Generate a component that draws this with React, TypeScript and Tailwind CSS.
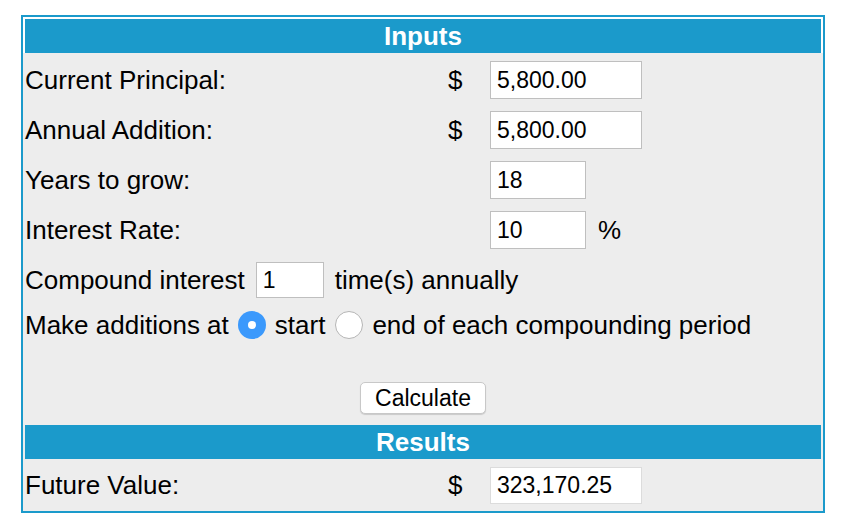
import React from "react";

const font = { fontFamily: '"Liberation Sans", Arial, Helvetica, sans-serif' };

function Field({ value, w, h = "h-[38px]", light = false }: { value: string; w: string; h?: string; light?: boolean }) {
  return (
    <div
      className={`${w} ${h} flex items-center bg-white border ${light ? "border-[#dcdcdc]" : "border-[#bfbfbf]"} pl-[6px] text-[23px] text-black`}
    >
      {value}
    </div>
  );
}

function Row({ label, dollar, children }: { label: string; dollar?: boolean; children: React.ReactNode }) {
  return (
    <div className="flex h-[50px] items-center">
      <div className="w-[425px] pl-[2px]">{label}</div>
      <div className="w-[42px]">{dollar ? "$" : ""}</div>
      {children}
    </div>
  );
}

function Radio({ checked }: { checked?: boolean }) {
  if (checked) {
    return (
      <span className="flex h-[28px] w-[28px] items-center justify-center rounded-full bg-[#3b99fc]">
        <span className="h-[8px] w-[8px] rounded-full bg-white" />
      </span>
    );
  }
  return <span className="h-[28px] w-[28px] rounded-full border border-[#b5b5b5] bg-white" />;
}

export default function App() {
  return (
    <div className="min-h-[530px] bg-white pl-[21px] pt-[15px]" style={font}>
      <div className="w-[804px] border-2 border-[#1b9acb] bg-white pt-[2px] text-[26px] leading-none text-black">
        <div className="mx-[2px] flex h-[34px] items-center justify-center bg-[#1b9acb] font-bold text-white">
          Inputs
        </div>

        <div className="bg-[#ededed] pt-[2px]">
          <Row label="Current Principal:" dollar>
            <Field value="5,800.00" w="w-[152px]" />
          </Row>
          <Row label="Annual Addition:" dollar>
            <Field value="5,800.00" w="w-[152px]" />
          </Row>
          <Row label="Years to grow:">
            <Field value="18" w="w-[96px]" />
          </Row>
          <Row label="Interest Rate:">
            <Field value="10" w="w-[96px]" />
            <span className="ml-[12px]">%</span>
          </Row>

          <div className="flex h-[50px] items-center pl-[2px]">
            <span>Compound interest</span>
            <div className="ml-[11px] mr-[11px]">
              <Field value="1" w="w-[68px]" h="h-[36px]" />
            </div>
            <span>time(s) annually</span>
          </div>

          <div className="flex h-[40px] items-center pl-[2px]">
            <span>Make additions at</span>
            <span className="ml-[9px] mr-[9px]">
              <Radio checked />
            </span>
            <span>start</span>
            <span className="ml-[10px] mr-[9px] flex">
              <Radio />
            </span>
            <span>end of each compounding period</span>
          </div>

          <div className="h-[37px]" />
          <div className="flex justify-center">
            <button className="h-[32px] w-[126px] rounded-[5px] border border-[#c8c8c8] bg-white text-[23px] text-black shadow-[0_1px_1px_rgba(0,0,0,0.15)]">
              Calculate
            </button>
          </div>
          <div className="h-[11px]" />

          <div className="mx-[2px] flex h-[34px] items-center justify-center bg-[#1b9acb] font-bold text-white">
            Results
          </div>

          <div className="flex h-[52px] items-center">
            <div className="w-[425px] pl-[2px]">Future Value:</div>
            <div className="w-[42px]">$</div>
            <Field value="323,170.25" w="w-[152px]" h="h-[37px]" light />
          </div>
        </div>
      </div>
    </div>
  );
}
